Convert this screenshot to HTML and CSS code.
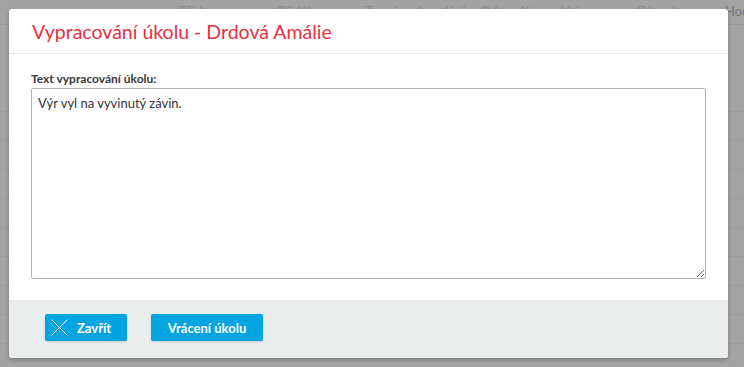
FILE: index.html
```html
<!DOCTYPE html>
<html lang="cs">
<head>
  <meta charset="UTF-8">
  <title>Vypracování úkolu</title>
  <link rel="stylesheet" href="styles.css">
</head>
<body>

  <!-- page behind the overlay -->
  <div class="page">
    <div class="thead">
      <span class="col c1">Třída</span>
      <span class="col c2">Přidáleno</span>
      <span class="col c3">Termín odevzdání</span>
      <span class="col c4">Odevzdáno</span>
      <span class="col c5">Vráceno</span>
      <span class="col c6">Důvod</span>
      <span class="col c7">Hodnocení</span>
    </div>
    <div class="row tall"></div>
    <div class="row"></div>
    <div class="row"></div>
    <div class="row"></div>
    <div class="row"></div>
    <div class="row"></div>
    <div class="row"></div>
    <div class="row"></div>
    <div class="row"></div>
    <div class="row"></div>
  </div>

  <div class="modal">
    <div class="modal-header">
      <h1>Vypracování úkolu - Drdová Amálie</h1>
    </div>
    <div class="modal-body">
      <label for="answer">Text vypracování úkolu:</label>
      <textarea id="answer">Výr vyl na vyvinutý závin.</textarea>
    </div>
    <div class="modal-footer">
      <button class="btn">
        <svg width="17" height="17" viewBox="0 0 17 17"><path d="M0.5 0.5 L16.5 16.5 M16.5 0.5 L0.5 16.5" stroke="#fff" stroke-width="1" fill="none"/></svg>
        Zavřít
      </button>
      <button class="btn wide">Vrácení úkolu</button>
    </div>
  </div>

</body>
</html>
```

FILE: styles.css
```css
body {
  margin: 0;
  background: #a3a3a3;
  font-family: Lato, "Open Sans", sans-serif;
  color: #333;
  overflow: hidden;
}
.page {
  height: 367px;
}
.thead {
  display: flex;
  height: 20px;
  padding-top: 4px;
  border-bottom: 1px solid #999;
  font-size: 13px;
  color: #8a8a8a;
  line-height: 15px;
  overflow: hidden;
}
.col {
  white-space: nowrap;
  flex-shrink: 0;
}
.c1 { margin-left: 180px; width: 98px; }
.c2 { width: 87px; }
.c3 { width: 115px; }
.c4 { width: 81px; }
.c5 { width: 76px; }
.c6 { width: 88px; }
.c7 { color: #777; }
.row {
  height: 28px;
  border-bottom: 1px solid #9b9b9b;
}
.row.tall {
  height: 86px;
}
.modal {
  position: absolute;
  top: 9px;
  left: 9px;
  width: 719px;
  height: 349px;
  background: #fff;
  border-radius: 3px;
  box-shadow: 0 2px 4px rgba(0,0,0,0.25);
  display: flex;
  flex-direction: column;
  overflow: hidden;
}
.modal-header {
  height: 44px;
  border-bottom: 1px solid #e8e8e8;
  display: flex;
  align-items: center;
  padding-left: 23px;
}
.modal-header h1 {
  margin: 0;
  font-size: 19.5px;
  font-weight: normal;
  color: #e8313f;
}
.modal-body {
  flex: 1;
  padding: 17px 22px 0 22px;
  display: flex;
  flex-direction: column;
}
label {
  font-size: 12px;
  font-weight: bold;
  line-height: 15px;
  color: #3a3a3a;
  margin-bottom: 2px;
}
textarea {
  height: 191px;
  box-sizing: border-box;
  border: 1px solid #a8b3b9;
  border-radius: 2px;
  padding: 5px 6px;
  font-family: Lato, "Open Sans", sans-serif;
  font-size: 13px;
  line-height: 18px;
  color: #333;
  resize: vertical;
  margin: 0;
}
.modal-footer {
  height: 58px;
  background: #e9edee;
  display: flex;
  align-items: flex-start;
  gap: 24px;
  padding: 14px 36px 0 36px;
  box-sizing: border-box;
}
.btn {
  height: 27px;
  width: 82px;
  background: #03a4e2;
  border: none;
  border-radius: 2px;
  color: #fff;
  font-family: Lato, "Open Sans", sans-serif;
  font-size: 13px;
  font-weight: bold;
  display: flex;
  align-items: center;
  justify-content: center;
  gap: 9px;
  box-shadow: 0 1px 2px rgba(0,0,0,0.15);
  cursor: pointer;
  padding: 0 6px;
}
.btn:first-child {
  justify-content: flex-start;
}
.btn.wide {
  width: 112px;
}
```
